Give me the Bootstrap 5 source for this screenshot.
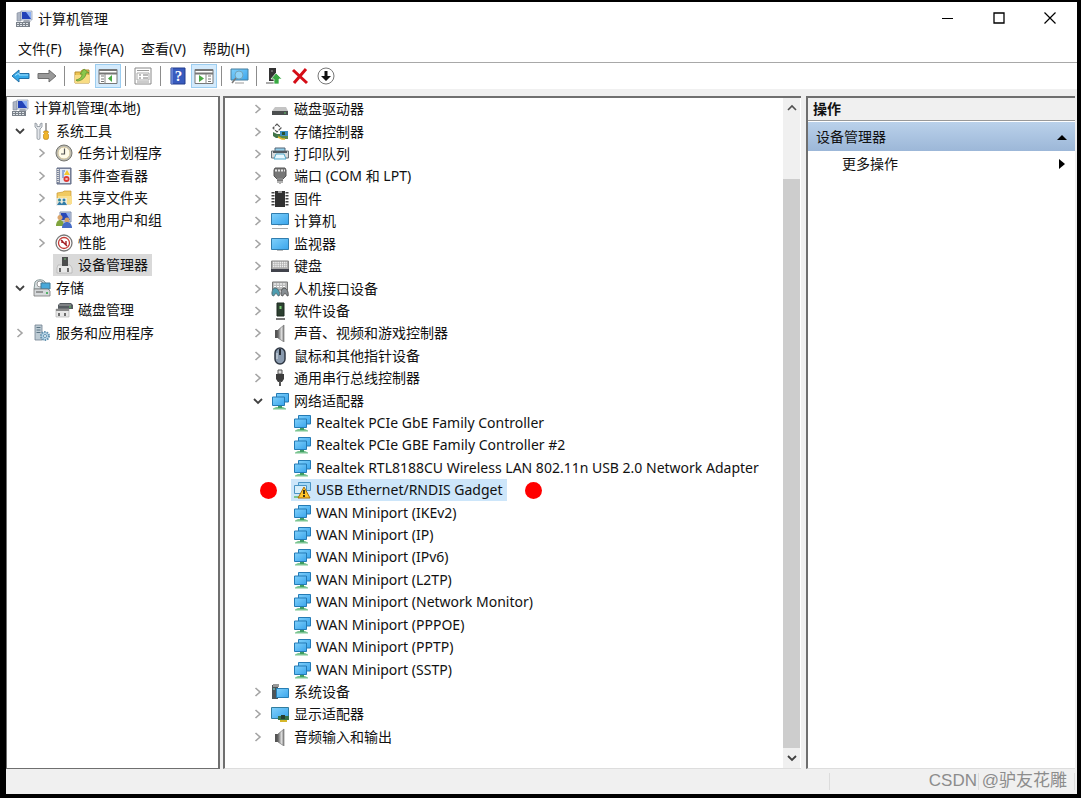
<!DOCTYPE html>
<html lang="zh-CN">
<head>
<meta charset="utf-8">
<meta name="viewport" content="width=device-width, initial-scale=1">
<title>计算机管理</title>
<link href="https://cdn.jsdelivr.net/npm/bootstrap@5.3.0/dist/css/bootstrap.min.css" rel="stylesheet">
<style>
body{background:#000;color:#111;font-family:"Noto Sans","Noto Sans CJK SC",sans-serif;font-size:14px;line-height:20px;padding:2px 4px 4px 6px}
button{border:0;background:none;padding:0;color:inherit}
svg{display:block;flex:none}
.window{background:#fff}
.titlebar{height:34px;padding:0 2px 0 9px}
.caption-text{font-size:14px;line-height:20px;font-weight:400;margin:0 0 0 5px}
.winbtn{width:51px;height:32px}
.menubar{height:27px;padding-left:12px;gap:17px;border-bottom:1px solid #a8a8a8}
.tools{height:26px;padding-left:2px}
.tool{width:26px;height:24px;display:flex;align-items:center;justify-content:center}
.tool.on{background:#d3eafc;border:1px solid #9ccdf0}
.rule{width:1px;height:20px;background:#8c8c8c}
.work{background:#f0f0f0;padding-top:7px;min-height:0}
.pane{background:#fff;border:0 solid #6f6f6f}
.pane-tree{width:214px;border-width:1px 2px 1px 1px}
.pane-list{margin-left:3px;border-width:2px 0 0 2px;border-bottom:1px solid #ddd}
.pane-act{width:269px;margin:0 2px 0 5px;border-width:2px 0 0 2px;border-bottom:1px solid #ddd}
.rows{display:grid;grid-template-rows:repeat(29,minmax(0,1fr));list-style:none;margin:0;padding:0 0 20px 2px;height:100%}
.rows li{display:flex;align-items:center;white-space:nowrap;min-height:0}
.pane-list .rows{padding-left:22px}
.l2{padding-left:22px}
.twist{width:22px;height:20px;display:flex;align-items:center;justify-content:center;flex:none}
.item{display:flex;align-items:center;gap:5px;height:22px;padding:0 4px 0 2px;color:#111;text-decoration:none}
.item.picked{background:#d9d9d9}
.item.chosen{background:#cde6fa}
.dot{width:17px;height:17px;border-radius:50%;background:#f00;flex:none}
.dot-slot{width:44px;padding-left:13px}
.dot.after{margin-left:18px}
.scroller{width:17px;background:#f0f0f0;margin-right:1px}
.scroller button{height:20px}
.thumb{background:#cdcdcd;height:85%;margin-top:auto}
.act-title{height:23px;background:#f0f0f0;border-bottom:1px solid #999;padding:0 5px;font-weight:700}
.act-group{height:29px;background:linear-gradient(#bad1ea,#9cb7d8);padding:0 8px 0 8px;margin-top:1px}
.act-more{height:26px;padding:0 9px 0 34px;width:100%}
.status{height:25px;background:#f0f0f0;position:relative}
.status span{border-left:1px solid #dcdcdc}
.s1{width:149px}.s2{width:96px}.s3{width:3px}
.credit{position:absolute;right:10px;top:0;margin:0;font-family:"Liberation Sans","Noto Sans CJK SC",sans-serif;font-size:17px;line-height:24px;color:#8c8c8c}
</style>
</head>
<body class="vh-100 overflow-hidden">
<svg width="0" height="0" class="position-absolute" aria-hidden="true">
<defs>
<linearGradient id="blue" x1="0" y1="0" x2="1" y2="1"><stop offset="0" stop-color="#7fd0fb"/><stop offset="1" stop-color="#3aa5ec"/></linearGradient>
<linearGradient id="metal" x1="0" x2="1"><stop offset="0" stop-color="#666"/><stop offset=".6" stop-color="#ddd"/><stop offset="1" stop-color="#777"/></linearGradient>
</defs>
<symbol id="right" viewBox="0 0 10 10"><path d="M2.500 1l4.500 4-4.500 4" fill="none" stroke="#a4a4a4" stroke-width="1.600"/></symbol>
<symbol id="down" viewBox="0 0 10 10"><path d="M1 3l4 4 4-4" fill="none" stroke="#404040" stroke-width="1.800"/></symbol>
<symbol id="pc" viewBox="0 0 18 18"><path d="M2 3l4-1v9H2z" fill="#aeb6c4" stroke="#7c8798" stroke-width=".6"/><path d="M6 1h11v9H6z" fill="#dde3ee" stroke="#8b98b0" stroke-width=".7"/><path d="M7 2h9v7H7z" fill="#2343b8"/><path d="M11 2h5v7z" fill="#8cb0f4"/><path d="M9 10h5l2 2H8z" fill="#a3a9b3"/><path d="M1 12h14v5H1z" fill="#7a818a"/><path d="M2 13.500h12M2 15.500h12" stroke="#dfe4e8" stroke-dasharray="2 1"/></symbol>
<symbol id="toolsi" viewBox="0 0 18 18"><path d="M2 1v4l2 2v9a1.500 1.500 0 0 0 3 0V7l2-2V1L7 2v2.500H4V2z" fill="#e2e5e9" stroke="#888f98" stroke-width=".8"/><path d="M13 1v8" stroke="#888" stroke-width="1.500"/><path d="M11 9h4l.5 1.500-1 1 1 1V16a2.500 1.500 0 0 1-5 0v-3.500l1-1-1-1z" fill="#f0b429" stroke="#b47c10" stroke-width=".6"/></symbol>
<symbol id="clock" viewBox="0 0 18 18"><circle cx="9" cy="9" r="8" fill="#b9b9b4" stroke="#77776f"/><circle cx="9" cy="9" r="6" fill="#fffbe9" stroke="#d4c69e"/><path d="M9.500 4.500V10H6" fill="none" stroke="#555" stroke-width="1.200"/></symbol>
<symbol id="event" viewBox="0 0 18 18"><path d="M2 1h14v16H2z" fill="#8790a5" stroke="#606b85"/><path d="M5 2h10v14H5z" fill="#e5eaf3"/><path d="M7 4h3M7 6h2M7 8h2M7 10h2" stroke="#4971be"/><path d="M3 2v14" stroke="#ddd" stroke-dasharray="1 1" stroke-width="2"/><path d="M12 3l3 5H9z" fill="#f4c62e"/><circle cx="11.500" cy="12" r="3" fill="#dd3a35"/><path d="M10.500 11l2 2m0-2l-2 2" stroke="#fff" stroke-width=".8"/></symbol>
<symbol id="share" viewBox="0 0 18 18"><path d="M2 4l6-1 1-1h7v13H2z" fill="#f1ca61" stroke="#c99830" stroke-width=".7"/><path d="M3 7h14v8H3z" fill="#fadf8d"/><path d="M1 9h11v8H1z" fill="#e9edf0" opacity=".8"/><circle cx="4.500" cy="11" r="1.500" fill="#2f8b9b"/><circle cx="9" cy="11" r="1.500" fill="#2f7dab"/><path d="M2 16l2-3h1l2 2 1-2h2l2 3z" fill="#327ca7"/></symbol>
<symbol id="users" viewBox="0 0 18 18"><path d="M5 1h11v10H5z" fill="#c7d0e3" stroke="#8190ae"/><path d="M6 2h9v7H6z" fill="#2848b8"/><path d="M11 2h4v7z" fill="#8cadf0"/><circle cx="5" cy="6.500" r="2.500" fill="#dba66c"/><path d="M1 15c0-8 8-8 8 0z" fill="#80a43d"/><circle cx="12" cy="9" r="2.500" fill="#d4a06b"/><path d="M7 17c0-8 10-8 10 0z" fill="#456cc7"/></symbol>
<symbol id="perf" viewBox="0 0 18 18"><circle cx="9" cy="9" r="8" fill="#fff" stroke="#777" stroke-width="1.300"/><circle cx="9" cy="9" r="5.500" fill="none" stroke="#c33b36" stroke-width="1.300"/><path d="M6 6l6 6M7 6v3M11 7v4" stroke="#a21a20" stroke-width="1.400"/></symbol>
<symbol id="devman" viewBox="0 0 18 18"><path d="M3 9h12l2 3v5H2v-5z" fill="#e9e9e9" stroke="#aaa" stroke-width=".6"/><path d="M7 1h6v9H7z" fill="#4c4d4e"/><path d="M9 3h2" stroke="#77bd77"/><path d="M5 12v4M13 12v4" stroke="#444" stroke-width="1.500"/></symbol>
<symbol id="store" viewBox="0 0 18 18"><path d="M2 3c2-3 8-3 10 0l3 7H1z" fill="#d8dfe2" stroke="#899"/><circle cx="7" cy="5" r="3" fill="#fff" stroke="#999"/><path d="M8 4h9v6H8z" fill="#48a8d9" stroke="#437a97"/><path d="M1 10h14l2 2v5H1z" fill="#d6d9db" stroke="#777" stroke-width=".8"/><path d="M3 13h7" stroke="#555"/><path d="M13 14h2" stroke="#29a543" stroke-width="1.500"/></symbol>
<symbol id="diskm" viewBox="0 0 18 18"><path d="M3 4l2-2h11l2 2v4H3z" fill="#555b60"/><path d="M4 4h12" stroke="#aaa"/><path d="M14 6h2" stroke="#62d665"/><path d="M1 8h13v8H1z" fill="#e8e8e8" stroke="#aaa" stroke-width=".6"/><path d="M1 8h13v2H1z" fill="#888"/><path d="M4 12v3M10 12v3" stroke="#444" stroke-width="1.500"/></symbol>
<symbol id="service" viewBox="0 0 18 18"><path d="M2 1h7v15H2z" fill="#bdcbd4" stroke="#72828f" stroke-width=".8"/><path d="M3.500 3.500h4M3.500 6h4M3.500 8.500h4" stroke="#5b7484"/><circle cx="12" cy="12" r="4" fill="#b9d7ea" stroke="#6493b0" stroke-width="2" stroke-dasharray="1.500 1"/><circle cx="12" cy="12" r="1.500" fill="#fff" stroke="#6493b0"/></symbol>
<symbol id="drive" viewBox="0 0 18 18"><path d="M4 7h11l2 4H1z" fill="#c4c4c4"/><path d="M1 11h16v4H1z" fill="#4b4e4f"/><path d="M13 13h2" stroke="#62c46c"/></symbol>
<symbol id="ctrl" viewBox="0 0 18 18"><path d="M2 9l4 2h11v4H5l-3-2z" fill="#3f7449"/><path d="M6 1l4 4-4 4-4-4z" fill="#fff" stroke="#555" stroke-width="1.200" stroke-dasharray="4 1"/><path d="M9 8h8v5H9z" fill="#3e8fc2"/><path d="M5 12l6 4h6v-3h-6z" fill="#5c8a4a"/><path d="M7 14l4 2h3" fill="none" stroke="#e1b72d" stroke-width="1.500"/><path d="M11 9h3v3h-3z" fill="#275230"/></symbol>
<symbol id="print" viewBox="0 0 18 18"><path d="M4 3h10v4H4z" fill="#91cde9" stroke="#567"/><path d="M.5 6h17v7H.5z" fill="#d7dadb" stroke="#6a7379"/><path d="M2 6h14v2H2z" fill="#525b61"/><path d="M5 9h8l2 5H3z" fill="#e8f8ff" stroke="#51a9ca"/></symbol>
<symbol id="port" viewBox="0 0 18 18"><path d="M4 1h10l1 2v6l-3 3H6L3 9V3z" fill="#777" stroke="#555"/><path d="M4 3.500h10" stroke="#e8e8e8" stroke-width="2" stroke-dasharray="2 1"/><path d="M6 11h6v3H6z" fill="#888"/><path d="M9 13v4M7 13v3M11 13v3" stroke="#666"/></symbol>
<symbol id="chip" viewBox="0 0 18 18"><path d="M2 2v15M16 2v15" stroke="#444" stroke-width="3" stroke-dasharray="1.500 1.500"/><path d="M4 1h10v16H4z" fill="#303030"/><path d="M7 1h4v2H7z" fill="#999"/></symbol>
<symbol id="comp" viewBox="0 0 18 18"><path d="M.5 1.500h17v11H.5z" fill="url(#blue)" stroke="#317dae"/><path d="M1 16.500h16" stroke="#aaa"/><path d="M7 13h4v1H7z" fill="#d4dfe5"/></symbol>
<symbol id="monitor" viewBox="0 0 18 18"><path d="M.5 3.500h17v11H.5z" fill="url(#blue)" stroke="#317dae"/><path d="M6 15.500h6" stroke="#bbb"/></symbol>
<symbol id="keys" viewBox="0 0 18 18"><path d="M.5 4h17v9H.5z" fill="#aaa" stroke="#888"/><path d="M2 5.500h14M2 7.500h14M2 9.500h14" stroke="#eee" stroke-width="1.300" stroke-dasharray="1.500 .7"/><path d="M0 12h18v3H0z" fill="#41434c"/></symbol>
<symbol id="hid" viewBox="0 0 18 18"><path d="M1.500 2h15v8h-15z" fill="#bbb" stroke="#777"/><path d="M3 4h12M3 6.500h12" stroke="#fff" stroke-dasharray="2 1"/><path d="M4 8c-3 0-4 7-2 8 2 0 2-3 3-3s1 3 3 3c2-3-1-8-4-8z" fill="#4d9db0" stroke="#516a72"/><path d="M13 8c-3 0-4 7-2 8 2 0 2-3 3-3s1 3 3 3c1-3-1-8-4-8z" fill="#888f94" stroke="#555"/></symbol>
<symbol id="soft" viewBox="0 0 18 18"><path d="M6 1h7v13H6z" fill="#2d4031" stroke="#1d2b20"/><path d="M8.500 4h2v3h-2z" fill="#77cb72"/><path d="M5 17h9" stroke="#777" stroke-width="2"/></symbol>
<symbol id="sound" viewBox="0 0 18 18"><path d="M4 6h3v8H4z" fill="#555"/><path d="M7 6l6-5v17l-6-4z" fill="url(#metal)" stroke="#777" stroke-width=".7"/></symbol>
<symbol id="mouse" viewBox="0 0 18 18"><rect x="4" y="1" width="10" height="16" rx="5" fill="#899aae" stroke="#303844" stroke-width="1.500"/><path d="M9 2v6" stroke="#252b34" stroke-width="2"/><path d="M6 6v6" stroke="#dbe4ec"/></symbol>
<symbol id="usb" viewBox="0 0 18 18"><path d="M7 1h4v4H7z" fill="#ddd" stroke="#555"/><path d="M5 5h8v5l-2 3H7l-2-3z" fill="#3d3d3d"/><path d="M9 12v5" stroke="#555" stroke-width="2"/></symbol>
<symbol id="net" viewBox="0 0 18 18"><path d="M5 15h7l3 1.500v1H2v-1z" fill="#7cc592"/><path d="M7 13h4v3H7z" fill="#3f9c63"/><path d="M5.500 1.500h12v8.500h-12z" fill="url(#blue)" stroke="#247bb5"/><path d="M1.500 5h12v8.500h-12z" fill="url(#blue)" stroke="#247bb5"/></symbol>
<symbol id="warn" viewBox="0 0 18 18"><path d="M5.500 1.500h12v8h-12z" fill="#a5d9f8" stroke="#4b94c4"/><path d="M1.500 4.500h12v8h-12z" fill="#d7eefa" stroke="#4b94c4"/><path d="M1 16h6" stroke="#7cc592" stroke-width="2"/><path d="M11 6l6 11H5z" fill="#ffc62b" stroke="#a76f0b"/><path d="M11 9v4M11 14v2" stroke="#111" stroke-width="1.600"/></symbol>
<symbol id="system" viewBox="0 0 18 18"><path d="M1 2h6v14H1z" fill="#4d5559"/><path d="M2 1h6v3H2z" fill="#999"/><path d="M3 5v2" stroke="#7ce2df"/><path d="M5.500 5.500h12v9h-12z" fill="url(#blue)" stroke="#277eb4"/></symbol>
<symbol id="display" viewBox="0 0 18 18"><path d="M.5 2.500h17v11H.5z" fill="url(#blue)" stroke="#317d9e"/><path d="M7 11h11v4H7z" fill="#367147"/><path d="M10 10h4v4h-4z" fill="#263e30"/><path d="M9 16h7" stroke="#d6b72a" stroke-width="2"/></symbol>
</svg>

<div class="window h-100 d-flex flex-column">
<header class="titlebar d-flex align-items-center flex-shrink-0">
<svg width="18" height="18"><use href="#pc"/></svg><h1 class="caption-text">计算机管理</h1>
<div class="ms-auto d-flex align-self-start">
<button class="winbtn" aria-label="最小化"><svg class="m-auto" width="12" height="12"><path d="M0 6.500h11" stroke="#000"/></svg></button>
<button class="winbtn" aria-label="最大化"><svg class="m-auto" width="12" height="12"><path d="M1 1h10v10H1z" fill="none" stroke="#000" stroke-width="1.300"/></svg></button>
<button class="winbtn" aria-label="关闭"><svg class="m-auto" width="12" height="12"><path d="M.5.5l11 11m0-11l-11 11" stroke="#000" stroke-width="1.200"/></svg></button>
</div></header>
<nav class="menubar d-flex align-items-center flex-shrink-0"><button>文件(F)</button><button>操作(A)</button><button>查看(V)</button><button>帮助(H)</button></nav>
<div class="tools d-flex align-items-center flex-shrink-0" role="toolbar">
<button class="tool" aria-label="后退"><svg width="20" height="16"><path d="M1 8l7-6v3.500h10v5H8V14z" fill="#35a8e8" stroke="#226fa5"/><path d="M4 7.500L8 5v2h9" fill="none" stroke="#a1e1ff"/></svg></button>
<button class="tool" aria-label="前进"><svg width="20" height="16"><path d="M19 8l-7-6v3.500H1v5h11V14z" fill="#999" stroke="#6f6f6f"/></svg></button>
<span class="rule ms-1"></span>
<button class="tool ms-1" aria-label="上一级"><svg width="18" height="18"><path d="M2 5h6l1-2h7v13H2z" fill="#edc452" stroke="#b88e2e"/><path d="M2 8h15l-1 8H2z" fill="#f8dc83"/><path d="M3 13c4-1 6-3 6-6H7l4-5 5 4h-3c0 4-4 8-9 8z" fill="#8ac84b" stroke="#548a2c" stroke-width=".7"/></svg></button>
<button class="tool on" aria-label="显示控制台树"><svg width="20" height="18"><path d="M1 2.500h18v14H1z" fill="#fff" stroke="#777"/><path d="M1 3h18M1 6.500h18" stroke="#777" stroke-width="2"/><path d="M7 7v10" stroke="#888"/><path d="M3 9h3M3 12h3M3 14.500h3" stroke="#777"/><path d="M14 8v7l-4-3.500z" fill="#4aa944"/></svg></button>
<span class="rule ms-1 me-1"></span>
<button class="tool me-1" aria-label="属性"><svg width="18" height="18"><path d="M1 1h16v16H1z" fill="#fff" stroke="#888"/><path d="M3 3.500h12M3 15h12" stroke="#999"/><path d="M3 6h12v7H3z" fill="none" stroke="#aaa"/><path d="M5 8h2m2 0h5M5 11h2m2 0h5" stroke="#777"/></svg></button>
<span class="rule"></span>
<button class="tool ms-1" aria-label="帮助"><svg width="16" height="18"><path d="M1 1h14v16H1z" fill="#385bbe" stroke="#233d8d"/><path d="M2 1v16" stroke="#8fa7eb"/><text x="8.500" y="14" text-anchor="middle" fill="#fff" font-family="Liberation Serif" font-weight="700" font-size="15">?</text></svg></button>
<button class="tool on" aria-label="显示操作窗格"><svg width="20" height="18"><path d="M1 2.500h18v14H1z" fill="#fff" stroke="#777"/><path d="M1 3h18M1 6.500h18" stroke="#777" stroke-width="2"/><path d="M12 7v10" stroke="#888"/><path d="M14 9h3M14 12h3M14 14.500h3" stroke="#777"/><path d="M5 8v7l5-3.500z" fill="#4aa944"/></svg></button>
<span class="rule ms-1 me-1"></span>
<button class="tool me-1" aria-label="扫描硬件"><svg width="19" height="18"><path d="M1 2h17v11H1z" fill="url(#blue)" stroke="#467f9e"/><path d="M5 16h9" stroke="#999"/><circle cx="9" cy="8" r="4" fill="#8fd3f7" stroke="#70a4bb"/><path d="M6 11l-4 5" stroke="#777" stroke-width="1.500"/></svg></button>
<span class="rule"></span>
<button class="tool ms-1" aria-label="更新驱动程序"><svg width="18" height="18"><path d="M4 1h7v13H4z" fill="#333"/><path d="M6 4h2" stroke="#999"/><path d="M1 16h9" stroke="#aaa" stroke-width="2"/><path d="M11 6l6 6h-3v5H9v-5H6z" fill="#38a942" stroke="#fff" stroke-width=".7"/></svg></button>
<button class="tool" aria-label="卸载设备"><svg width="18" height="18"><path d="M2 3l14 13M15 2L3 16" stroke="#d50d17" stroke-width="3"/></svg></button>
<button class="tool" aria-label="禁用设备"><svg width="18" height="18"><circle cx="9" cy="9" r="8" fill="#fff" stroke="#777"/><path d="M7.500 4h3v5H14l-5 5-5-5h3.500z" fill="#111"/></svg></button>
</div>

<main class="work d-flex flex-grow-1">
<nav class="pane pane-tree flex-shrink-0" aria-label="控制台树"><ul class="rows">
<li><a class="item" href="#"><svg width="18" height="18"><use href="#pc"/></svg>计算机管理(本地)</a></li>
<li><button class="twist" aria-label="折叠"><svg width="10" height="10"><use href="#down"/></svg></button><a class="item" href="#"><svg width="18" height="18"><use href="#toolsi"/></svg>系统工具</a></li>
<li class="l2"><button class="twist" aria-label="展开"><svg width="10" height="10"><use href="#right"/></svg></button><a class="item" href="#"><svg width="18" height="18"><use href="#clock"/></svg>任务计划程序</a></li>
<li class="l2"><button class="twist" aria-label="展开"><svg width="10" height="10"><use href="#right"/></svg></button><a class="item" href="#"><svg width="18" height="18"><use href="#event"/></svg>事件查看器</a></li>
<li class="l2"><button class="twist" aria-label="展开"><svg width="10" height="10"><use href="#right"/></svg></button><a class="item" href="#"><svg width="18" height="18"><use href="#share"/></svg>共享文件夹</a></li>
<li class="l2"><button class="twist" aria-label="展开"><svg width="10" height="10"><use href="#right"/></svg></button><a class="item" href="#"><svg width="18" height="18"><use href="#users"/></svg>本地用户和组</a></li>
<li class="l2"><button class="twist" aria-label="展开"><svg width="10" height="10"><use href="#right"/></svg></button><a class="item" href="#"><svg width="18" height="18"><use href="#perf"/></svg>性能</a></li>
<li class="l2"><span class="twist"></span><a class="item picked" href="#"><svg width="18" height="18"><use href="#devman"/></svg>设备管理器</a></li>
<li><button class="twist" aria-label="折叠"><svg width="10" height="10"><use href="#down"/></svg></button><a class="item" href="#"><svg width="18" height="18"><use href="#store"/></svg>存储</a></li>
<li class="l2"><span class="twist"></span><a class="item" href="#"><svg width="18" height="18"><use href="#diskm"/></svg>磁盘管理</a></li>
<li><button class="twist" aria-label="展开"><svg width="10" height="10"><use href="#right"/></svg></button><a class="item" href="#"><svg width="18" height="18"><use href="#service"/></svg>服务和应用程序</a></li>
</ul></nav>

<section class="pane pane-list d-flex flex-grow-1" aria-label="设备"><ul class="rows flex-grow-1">
<li><button class="twist" aria-label="展开"><svg width="10" height="10"><use href="#right"/></svg></button><a class="item" href="#"><svg width="18" height="18"><use href="#drive"/></svg>磁盘驱动器</a></li>
<li><button class="twist" aria-label="展开"><svg width="10" height="10"><use href="#right"/></svg></button><a class="item" href="#"><svg width="18" height="18"><use href="#ctrl"/></svg>存储控制器</a></li>
<li><button class="twist" aria-label="展开"><svg width="10" height="10"><use href="#right"/></svg></button><a class="item" href="#"><svg width="18" height="18"><use href="#print"/></svg>打印队列</a></li>
<li><button class="twist" aria-label="展开"><svg width="10" height="10"><use href="#right"/></svg></button><a class="item" href="#"><svg width="18" height="18"><use href="#port"/></svg>端口 (COM 和 LPT)</a></li>
<li><button class="twist" aria-label="展开"><svg width="10" height="10"><use href="#right"/></svg></button><a class="item" href="#"><svg width="18" height="18"><use href="#chip"/></svg>固件</a></li>
<li><button class="twist" aria-label="展开"><svg width="10" height="10"><use href="#right"/></svg></button><a class="item" href="#"><svg width="18" height="18"><use href="#comp"/></svg>计算机</a></li>
<li><button class="twist" aria-label="展开"><svg width="10" height="10"><use href="#right"/></svg></button><a class="item" href="#"><svg width="18" height="18"><use href="#monitor"/></svg>监视器</a></li>
<li><button class="twist" aria-label="展开"><svg width="10" height="10"><use href="#right"/></svg></button><a class="item" href="#"><svg width="18" height="18"><use href="#keys"/></svg>键盘</a></li>
<li><button class="twist" aria-label="展开"><svg width="10" height="10"><use href="#right"/></svg></button><a class="item" href="#"><svg width="18" height="18"><use href="#hid"/></svg>人机接口设备</a></li>
<li><button class="twist" aria-label="展开"><svg width="10" height="10"><use href="#right"/></svg></button><a class="item" href="#"><svg width="18" height="18"><use href="#soft"/></svg>软件设备</a></li>
<li><button class="twist" aria-label="展开"><svg width="10" height="10"><use href="#right"/></svg></button><a class="item" href="#"><svg width="18" height="18"><use href="#sound"/></svg>声音、视频和游戏控制器</a></li>
<li><button class="twist" aria-label="展开"><svg width="10" height="10"><use href="#right"/></svg></button><a class="item" href="#"><svg width="18" height="18"><use href="#mouse"/></svg>鼠标和其他指针设备</a></li>
<li><button class="twist" aria-label="展开"><svg width="10" height="10"><use href="#right"/></svg></button><a class="item" href="#"><svg width="18" height="18"><use href="#usb"/></svg>通用串行总线控制器</a></li>
<li><button class="twist" aria-label="折叠"><svg width="10" height="10"><use href="#down"/></svg></button><a class="item" href="#"><svg width="18" height="18"><use href="#net"/></svg>网络适配器</a></li>
<li class="l2"><span class="twist"></span><a class="item" href="#"><svg width="18" height="18"><use href="#net"/></svg>Realtek PCIe GbE Family Controller</a></li>
<li class="l2"><span class="twist"></span><a class="item" href="#"><svg width="18" height="18"><use href="#net"/></svg>Realtek PCIe GBE Family Controller #2</a></li>
<li class="l2"><span class="twist"></span><a class="item" href="#"><svg width="18" height="18"><use href="#net"/></svg>Realtek RTL8188CU Wireless LAN 802.11n USB 2.0 Network Adapter</a></li>
<li><span class="dot-slot"><span class="dot d-block"></span></span><a class="item chosen" href="#"><svg width="18" height="18"><use href="#warn"/></svg>USB Ethernet/RNDIS Gadget</a><span class="dot after"></span></li>
<li class="l2"><span class="twist"></span><a class="item" href="#"><svg width="18" height="18"><use href="#net"/></svg>WAN Miniport (IKEv2)</a></li>
<li class="l2"><span class="twist"></span><a class="item" href="#"><svg width="18" height="18"><use href="#net"/></svg>WAN Miniport (IP)</a></li>
<li class="l2"><span class="twist"></span><a class="item" href="#"><svg width="18" height="18"><use href="#net"/></svg>WAN Miniport (IPv6)</a></li>
<li class="l2"><span class="twist"></span><a class="item" href="#"><svg width="18" height="18"><use href="#net"/></svg>WAN Miniport (L2TP)</a></li>
<li class="l2"><span class="twist"></span><a class="item" href="#"><svg width="18" height="18"><use href="#net"/></svg>WAN Miniport (Network Monitor)</a></li>
<li class="l2"><span class="twist"></span><a class="item" href="#"><svg width="18" height="18"><use href="#net"/></svg>WAN Miniport (PPPOE)</a></li>
<li class="l2"><span class="twist"></span><a class="item" href="#"><svg width="18" height="18"><use href="#net"/></svg>WAN Miniport (PPTP)</a></li>
<li class="l2"><span class="twist"></span><a class="item" href="#"><svg width="18" height="18"><use href="#net"/></svg>WAN Miniport (SSTP)</a></li>
<li><button class="twist" aria-label="展开"><svg width="10" height="10"><use href="#right"/></svg></button><a class="item" href="#"><svg width="18" height="18"><use href="#system"/></svg>系统设备</a></li>
<li><button class="twist" aria-label="展开"><svg width="10" height="10"><use href="#right"/></svg></button><a class="item" href="#"><svg width="18" height="18"><use href="#display"/></svg>显示适配器</a></li>
<li><button class="twist" aria-label="展开"><svg width="10" height="10"><use href="#right"/></svg></button><a class="item" href="#"><svg width="18" height="18"><use href="#sound"/></svg>音频输入和输出</a></li>
</ul>
<div class="scroller d-flex flex-column flex-shrink-0"><button aria-label="向上滚动"><svg class="m-auto" width="10" height="10"><path d="M1 7l4-4 4 4" fill="none" stroke="#505050" stroke-width="1.600"/></svg></button><div class="thumb"></div><button aria-label="向下滚动"><svg class="m-auto" width="10" height="10"><use href="#down"/></svg></button></div>
</section>

<aside class="pane pane-act flex-shrink-0">
<div class="act-title d-flex align-items-center">操作</div>
<div class="act-group d-flex align-items-center justify-content-between">设备管理器<svg width="10" height="6"><path d="M0 6l5-5 5 5z" fill="#000"/></svg></div>
<button class="act-more d-flex align-items-center justify-content-between">更多操作<svg width="7" height="10"><path d="M0 0l6 5-6 5z" fill="#000"/></svg></button>
</aside>
</main>
<footer class="status d-flex justify-content-end flex-shrink-0 py-1"><span class="s1"></span><span class="s2"></span><span class="s3"></span><p class="credit">CSDN @驴友花雕</p></footer>
</div>
<script src="https://cdn.jsdelivr.net/npm/bootstrap@5.3.0/dist/js/bootstrap.bundle.min.js"></script>
</body>
</html>
